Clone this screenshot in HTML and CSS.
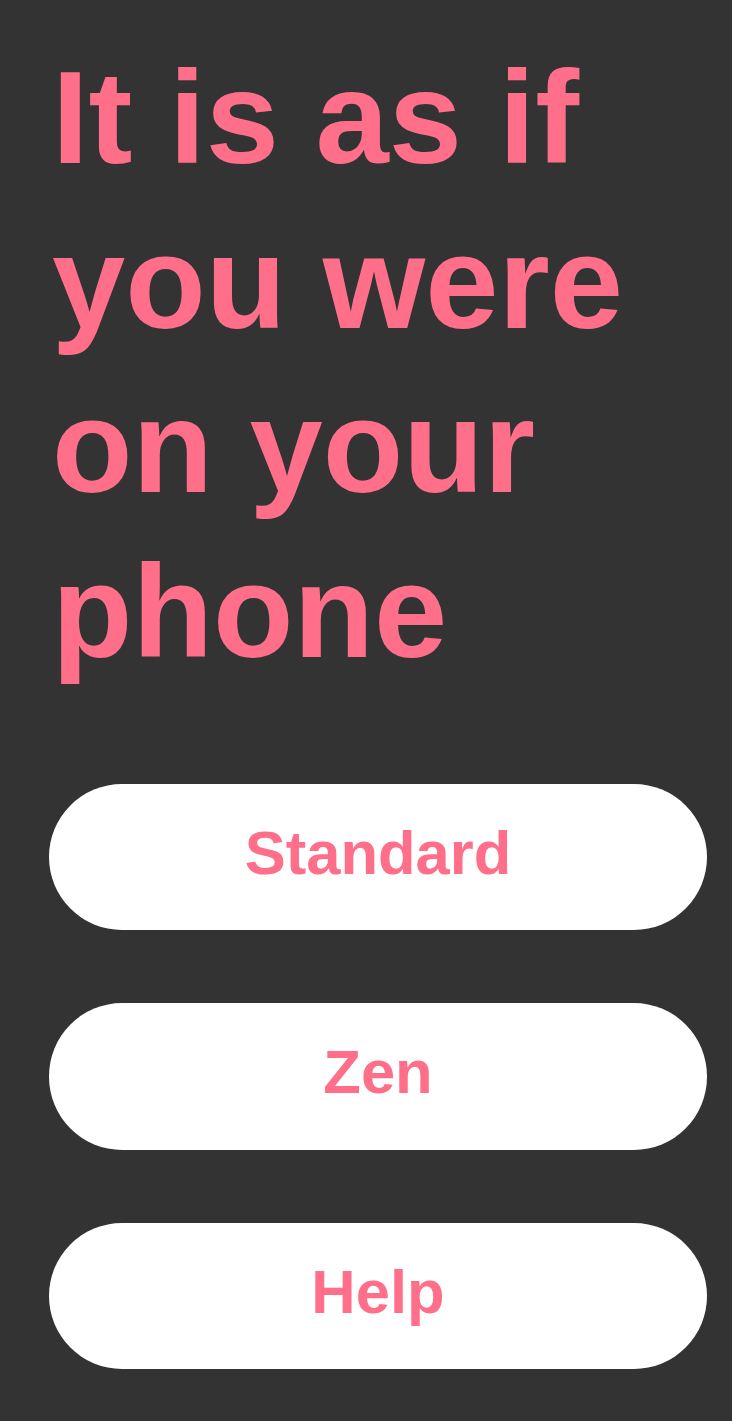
FILE: index.html
```html
<!DOCTYPE html>
<html lang="en">
<head>
<meta charset="utf-8">
<title>It is as if you were on your phone</title>
<link rel="stylesheet" href="styles.css">
</head>
<body>
<main class="screen">
  <h1 class="title">It is as if you were on your phone</h1>
  <nav class="menu">
    <button class="menu-btn" type="button">Standard</button>
    <button class="menu-btn" type="button">Zen</button>
    <button class="menu-btn" type="button">Help</button>
  </nav>
</main>
</body>
</html>
```
FILE: styles.css
```css
html, body {
  margin: 0;
  padding: 0;
  background: #333333;
}
body {
  font-family: "Liberation Sans", Arial, sans-serif;
  color: #ff6f89;
}
.screen {
  padding: 36px 25px 52px 49px;
  display: flex;
  flex-direction: column;
}
.title {
  margin: 0;
  font-size: 131.76px;
  line-height: 164.7px;
  font-weight: 700;
  color: #ff6f89;
  padding-left: 3px;
}
.menu {
  margin-top: 89px;
  display: flex;
  flex-direction: column;
  gap: 73.2px;
}
.menu-btn {
  width: 658px;
  height: 146.4px;
  border: none;
  border-radius: 73.2px;
  background: #ffffff;
  color: #ff6f89;
  font-family: "Liberation Sans", Arial, sans-serif;
  font-weight: 700;
  font-size: 61.5px;
  padding: 0 0 10px;
  display: flex;
  align-items: center;
  justify-content: center;
}
```
